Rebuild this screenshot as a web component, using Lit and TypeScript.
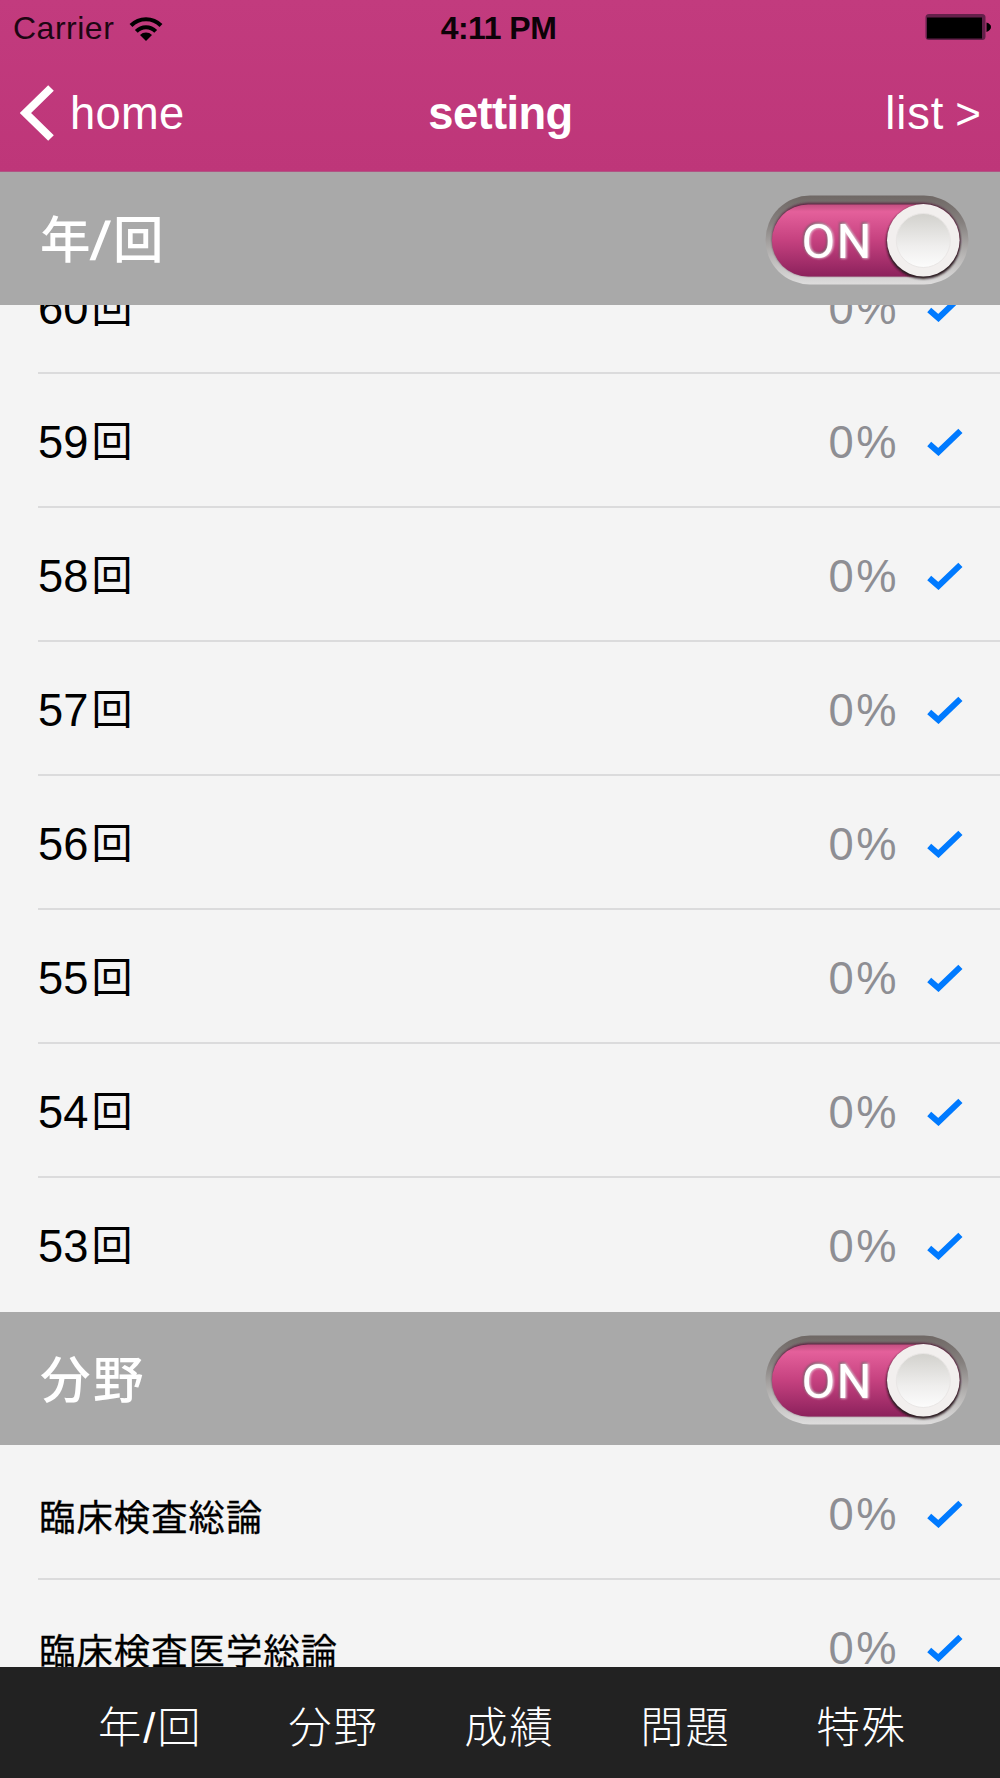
import { LitElement, html, css, svg } from "lit";
import { customElement, property } from "lit/decorators.js";

const years = ["60", "59", "58", "57", "56", "55", "54", "53"];
const subjects = ["臨床検査総論", "臨床検査医学総論"];
const tabs = ["年/回", "分野", "成績", "問題", "特殊"];

@customElement("on-switch")
class OnSwitch extends LitElement {
  static styles = css`
    :host { display: block; width: 204px; height: 90px; }
    .art { display: block; }
    .label { font-family: Roboto, sans-serif; font-size: 49px; font-weight: 400; }
  `;
  render() {
    return html`<svg class="art" width="204" height="90" viewBox="0 0 204 90">
      ${svg`
      <defs>
        <linearGradient id="rim" x1="0" y1="0" x2="0" y2="1">
          <stop offset="0" stop-color="#6f6865"></stop>
          <stop offset=".3" stop-color="#85807e"></stop>
          <stop offset=".65" stop-color="#b5b3b2"></stop>
          <stop offset="1" stop-color="#dedddd"></stop>
        </linearGradient>
        <linearGradient id="fill" x1="0" y1="0" x2="0" y2="1">
          <stop offset="0" stop-color="#c24f80"></stop>
          <stop offset=".1" stop-color="#e4609b"></stop>
          <stop offset=".5" stop-color="#c5417f"></stop>
          <stop offset="1" stop-color="#8c215c"></stop>
        </linearGradient>
        <linearGradient id="dish" x1="0" y1="0" x2="0" y2="1">
          <stop offset="0" stop-color="#d2d1cd"></stop>
          <stop offset=".6" stop-color="#efeeed"></stop>
          <stop offset="1" stop-color="#fcfcfc"></stop>
        </linearGradient>
        <filter id="soft" x="-20%" y="-20%" width="140%" height="140%"><feGaussianBlur stdDeviation="1.3"></feGaussianBlur></filter>
      </defs>
      <rect x="0.5" y="0.5" width="203" height="89" rx="44.5" fill="url(#rim)"></rect>
      <rect x="7" y="8" width="188" height="73" rx="36.5" fill="#5a2040" filter="url(#soft)"></rect>
      <rect x="7" y="9.5" width="188" height="72" rx="36" fill="url(#fill)"></rect>
      <text class="label" x="36" y="62" fill="#5d5056" stroke="#5d5056" stroke-width="1" filter="url(#soft)" textLength="70">ON</text>
      <text class="label" x="37.2" y="63.3" fill="#f3c4d8" stroke="#f3c4d8" stroke-width="1" filter="url(#soft)" textLength="70">ON</text>
      <text class="label" x="36.5" y="62.8" fill="#fff" textLength="70">ON</text>
      <circle cx="158.3" cy="47" r="37" fill="#2c1d20" filter="url(#soft)"></circle>
      <circle cx="158.3" cy="45.2" r="36.3" fill="#f2efee"></circle>
      <circle cx="158.3" cy="45.5" r="27" fill="url(#dish)" stroke="#e9e6e5" stroke-width="1"></circle>
      `}
    </svg>`;
  }
}

@customElement("section-bar")
class SectionBar extends LitElement {
  @property() label = "";
  static styles = css`
    :host { display: flex; flex: none; box-sizing: border-box; height: 133px; align-items: center; justify-content: space-between;
      padding: 2px 31px 0 40px; background: #a9a9a9; }
    .title { display: flex; font: 500 50.5px/60px "Liberation Sans", "Noto Sans CJK JP", sans-serif; letter-spacing: 2.5px; color: #fff;
      white-space: nowrap; padding-top: 3px; }
    .slash { padding: 0 3px 0 0; font-size: 52px; -webkit-text-stroke: 1.6px #fff; transform: skewX(-7deg); }
  `;
  render() {
    const [first, rest] = this.label.split("/");
    return html`<span class="title">${first}${rest ? html`<span class="slash">/</span>${rest}` : ""}</span><on-switch></on-switch>`;
  }
}

@customElement("check-row")
class CheckRow extends LitElement {
  @property() label = "";
  @property({ type: Boolean }) small = false;
  static styles = css`
    :host { display: block; flex: none; height: 134px; padding-left: 38px; }
    .row { box-sizing: border-box; height: 134px; display: flex; align-items: center; border-bottom: 2px solid #dbdbdc; padding: 3px 37px 0 0; }
    :host([last]) .row { border-bottom-color: transparent; }
    .label { flex: 1; font: 45.3px/60px "Liberation Sans", "Noto Sans CJK JP", sans-serif; color: #000; white-space: nowrap; padding-top: 3px; }
    .label.small { font-size: 36.3px; letter-spacing: 1.1px; padding: 10px 0 0 1px; font-weight: 400; -webkit-text-stroke: .3px #000; }
    .unit { font-size: 41px; margin-left: 3px; position: relative; top: -2px; }
    .percent { font: 45.3px/60px "Liberation Sans", sans-serif; color: #8e8e93; letter-spacing: 2.5px; margin-right: 28px; padding-top: 3px; }
    .check { width: 36px; height: 28px; flex: none; }
  `;
  render() {
    return html`<div class="row">
      ${this.small
        ? html`<span class="label small">${this.label}</span>`
        : html`<span class="label">${this.label}<span class="unit">回</span></span>`}
      <span class="percent">0%</span>
      <svg class="check" viewBox="0 0 36 28"><path d="M2.2 16L11.4 24L33.4 2.8" fill="none" stroke="#007aff" stroke-width="6"></path></svg>
    </div>`;
  }
}

@customElement("app-root")
class AppRoot extends LitElement {
  static styles = css`
    :host { display: flex; flex-direction: column; width: 1000px; height: 1778px; overflow: hidden; background: #f4f4f4;
      font-family: "Liberation Sans", "Noto Sans CJK JP", sans-serif; }
    .top { flex: none; height: 172px; background: linear-gradient(#c23b7e, #be3679); box-sizing: border-box; border-bottom: 1px solid #b15585; }
    .status { display: grid; grid-template-columns: 1fr auto 1fr; align-items: center; height: 56px; padding: 0 9px 0 13px; font-size: 32px; color: #1d0612; }
    .carrier { display: flex; align-items: center; gap: 15px; letter-spacing: .5px; }
    .clock { font-weight: 700; color: #0d0208; letter-spacing: -.5px; margin: 0 7px 0 0; }
    .battery { justify-self: end; display: block; margin-top: -2px; }
    .nav { display: grid; grid-template-columns: 1fr auto 1fr; align-items: center; height: 115px; padding: 0 19px 0 20px; font-size: 45.3px; color: #fff; }
    .back { display: flex; align-items: center; gap: 15px; letter-spacing: .3px; }
    .chevron { margin-top: -1px; }
    .title { font-weight: 700; letter-spacing: -.6px; }
    .next { justify-self: end; display: flex; align-items: baseline; gap: 11px; letter-spacing: .9px; }
    .arrow { font-size: 44px; letter-spacing: 0; }
    .content { flex: none; height: 1495px; overflow: hidden; display: flex; flex-direction: column; }
    .years { flex: none; height: 1007px; overflow: hidden; display: flex; flex-direction: column; justify-content: flex-end; }
    .subjects { flex: none; padding-top: 1px; }
    .tabs { flex: 1; display: flex; gap: 85.5px; align-items: center; padding: 11px 0 0 98px; background: #222; color: #fff; font-size: 43.3px; letter-spacing: 2px; font-weight: 300; }
    .tab { white-space: nowrap; line-height: 60px; }
  `;
  render() {
    return html`
      <header class="top">
        <div class="status">
          <span class="carrier">Carrier
            <svg width="34" height="25" viewBox="0 0 34 25">
              <path d="M2 9.5A21 21 0 0 1 32 9.5M7.3 15.3A13.5 13.5 0 0 1 26.7 15.3" fill="none" stroke="#000" stroke-width="4"></path>
              <path d="M11 19A8.5 8.5 0 0 1 23 19L17 25Z" fill="#000"></path>
            </svg>
          </span>
          <span class="clock">4:11 PM</span>
          <svg class="battery" width="66" height="28" viewBox="0 0 66 28">
            <rect x=".5" y="1" width="60" height="26" rx="3.5" fill="#64204a"></rect>
            <rect x="2" y="4.5" width="55" height="21" fill="#000"></rect>
            <path d="M61.5 9.5Q66 11 66 14Q66 17 61.5 19Z" fill="#000"></path>
          </svg>
        </div>
        <div class="nav">
          <span class="back">
            <svg class="chevron" width="35" height="56" viewBox="0 0 35 56"><path d="M31 3L5.5 28L31 53" fill="none" stroke="#fff" stroke-width="8"></path></svg>
            <span>home</span>
          </span>
          <span class="title">setting</span>
          <span class="next"><span>list</span><span class="arrow">&gt;</span></span>
        </div>
      </header>
      <main class="content">
        <section-bar label="年/回"></section-bar>
        <div class="years">
          ${years.map((y, i) => html`<check-row label=${y} ?last=${i === years.length - 1}></check-row>`)}
        </div>
        <section-bar label="分野"></section-bar>
        <div class="subjects">${subjects.map((s) => html`<check-row label=${s} small></check-row>`)}</div>
      </main>
      <nav class="tabs">${tabs.map((t) => html`<span class="tab">${t}</span>`)}</nav>
    `;
  }
}
